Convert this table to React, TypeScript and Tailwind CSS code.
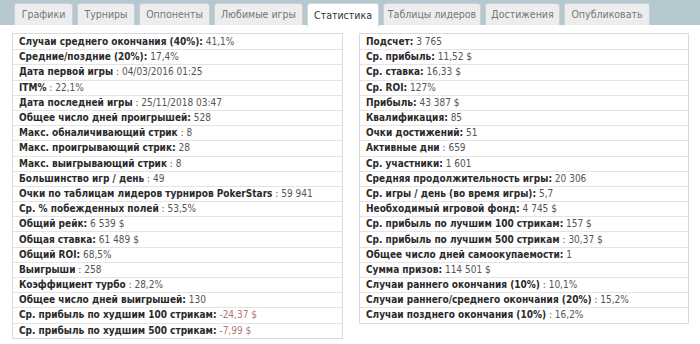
type Row = { label: string; value: string; bold?: boolean; neg?: boolean };

const tabs = [
  { name: "Графики", w: "w-[59px]" },
  { name: "Турниры", w: "w-[58px]" },
  { name: "Оппоненты", w: "w-[71px]" },
  { name: "Любимые игры", w: "w-[89px]" },
  { name: "Статистика", w: "w-[72px]", active: true },
  { name: "Таблицы лидеров", w: "w-[98px]" },
  { name: "Достижения", w: "w-[75px]" },
  { name: "Опубликовать", w: "w-[86px]" },
];

// bold = colon belongs to the bold label, otherwise " : value" in normal weight
const left: Row[] = [
  { label: "Случаи среднего окончания (40%)", value: "41,1%", bold: true },
  { label: "Средние/поздние (20%)", value: "17,4%", bold: true },
  { label: "Дата первой игры", value: "04/03/2016 01:25" },
  { label: "ITM%", value: "22,1%" },
  { label: "Дата последней игры", value: "25/11/2018 03:47" },
  { label: "Общее число дней проигрышей", value: "528", bold: true },
  { label: "Макс. обналичивающий стрик", value: "8" },
  { label: "Макс. проигрывающий стрик", value: "28", bold: true },
  { label: "Макс. выигрывающий стрик", value: "8" },
  { label: "Большинство игр / день", value: "49" },
  { label: "Очки по таблицам лидеров турниров PokerStars", value: "59 941" },
  { label: "Ср. % побежденных полей", value: "53,5%" },
  { label: "Общий рейк", value: "6 539 $", bold: true },
  { label: "Общая ставка", value: "61 489 $", bold: true },
  { label: "Общий ROI", value: "68,5%", bold: true },
  { label: "Выигрыши", value: "258" },
  { label: "Коэффициент турбо", value: "28,2%" },
  { label: "Общее число дней выигрышей", value: "130", bold: true },
  { label: "Ср. прибыль по худшим 100 стрикам", value: "-24,37 $", bold: true, neg: true },
  { label: "Ср. прибыль по худшим 500 стрикам", value: "-7,99 $", bold: true, neg: true },
];

const right: Row[] = [
  { label: "Подсчет", value: "3 765", bold: true },
  { label: "Ср. прибыль", value: "11,52 $", bold: true },
  { label: "Ср. ставка", value: "16,33 $", bold: true },
  { label: "Ср. ROI", value: "127%", bold: true },
  { label: "Прибыль", value: "43 387 $", bold: true },
  { label: "Квалификация", value: "85", bold: true },
  { label: "Очки достижений", value: "51", bold: true },
  { label: "Активные дни", value: "659" },
  { label: "Ср. участники", value: "1 601", bold: true },
  { label: "Средняя продолжительность игры", value: "20 306", bold: true },
  { label: "Ср. игры / день (во время игры)", value: "5,7", bold: true },
  { label: "Необходимый игровой фонд", value: "4 745 $", bold: true },
  { label: "Ср. прибыль по лучшим 100 стрикам", value: "157 $", bold: true },
  { label: "Ср. прибыль по лучшим 500 стрикам", value: "30,37 $" },
  { label: "Общее число дней самоокупаемости", value: "1", bold: true },
  { label: "Сумма призов", value: "114 501 $", bold: true },
  { label: "Случаи раннего окончания (10%)", value: "10,1%" },
  { label: "Случаи раннего/среднего окончания (20%)", value: "15,2%" },
  { label: "Случаи позднего окончания (10%)", value: "16,2%" },
];

function StatTable({ rows, width }: { rows: Row[]; width: string }) {
  return (
    <div className={`${width} border border-[#dadada] bg-white`}>
      {rows.map((r, i) => (
        <div
          key={i}
          className={`flex h-[15.2px] items-center whitespace-nowrap px-[6px] ${
            i > 0 ? "border-t border-[#e4e4e4]" : ""
          }`}
        >
          <span className="font-bold text-[#2a2a2a]">
            {r.label}
            {r.bold ? ":" : ""}
          </span>
          <span className={r.neg ? "text-[#b07a72]" : "text-[#555]"}>
            {r.bold ? "\u00a0" : "\u00a0:\u00a0"}
            {r.value}
          </span>
        </div>
      ))}
    </div>
  );
}

export default function App() {
  return (
    <div className="h-[344px] w-[700px] overflow-hidden bg-white font-['DejaVu_Sans_Condensed','DejaVu_Sans',sans-serif] text-[10px] leading-none">
      <div className="flex h-[25px] items-end gap-[4px] bg-[#b5c8d0] pl-[14px]">
        {tabs.map((t) =>
          t.active ? (
            <div
              key={t.name}
              className={`${t.w} relative top-[2px] flex h-[24px] items-center justify-center rounded-t-[3px] border border-b-0 border-[#cfd6d9] bg-white text-[10.5px] text-[#333]`}
            >
              {t.name}
            </div>
          ) : (
            <div
              key={t.name}
              className={`${t.w} flex h-[22px] items-center justify-center rounded-t-[3px] border border-b-0 border-[#c9cfd2] bg-[#ededed] text-[10.5px] text-[#777]`}
            >
              {t.name}
            </div>
          ),
        )}
      </div>
      <div className="flex gap-[16px] pl-[12px] pt-[8px]">
        <StatTable rows={left} width="w-[331px]" />
        <div className="self-start">
          <StatTable rows={right} width="w-[330px]" />
        </div>
      </div>
    </div>
  );
}
